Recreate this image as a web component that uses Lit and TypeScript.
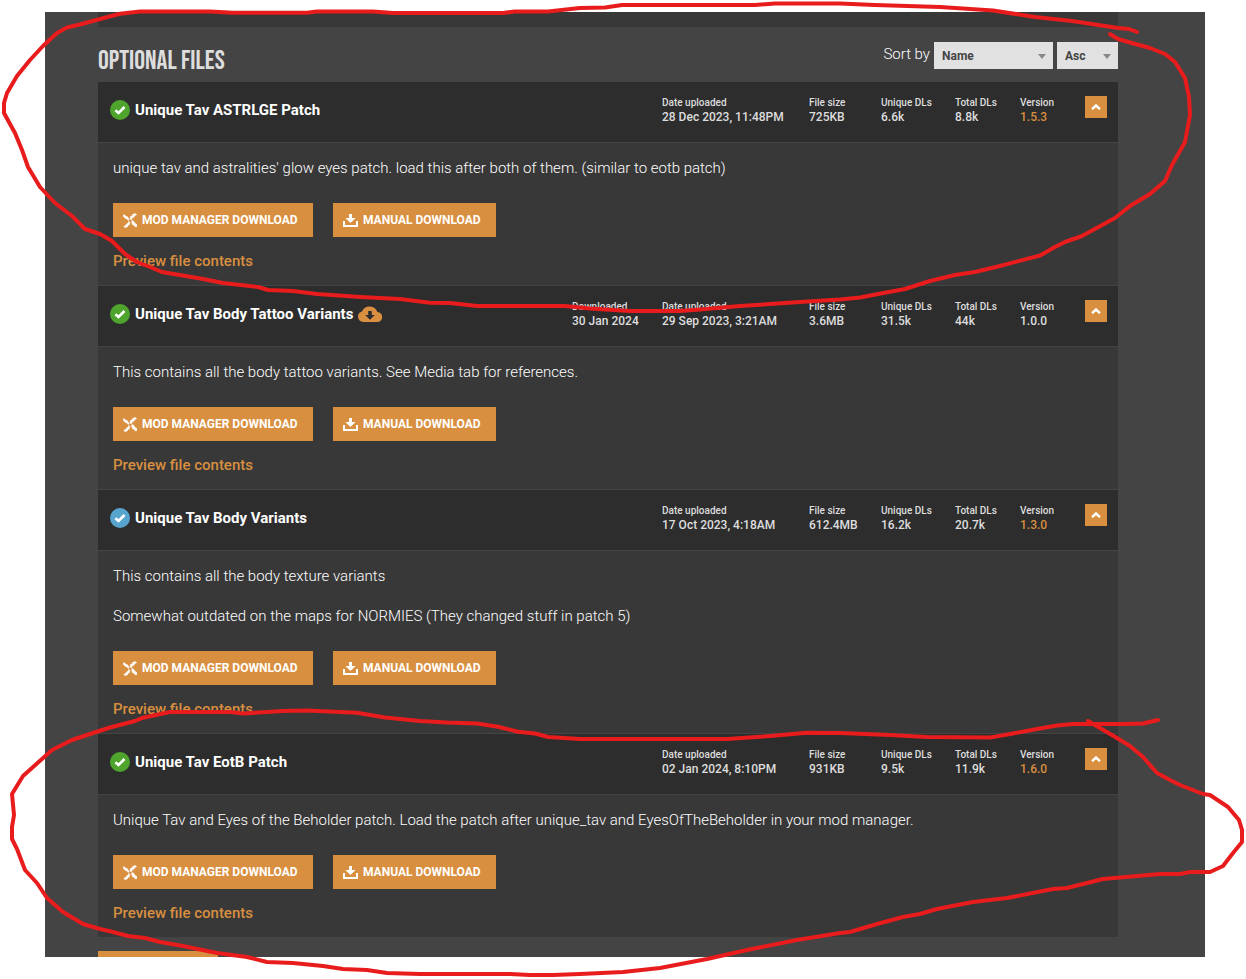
import { LitElement, html, css, svg, nothing } from "lit";
import { customElement, property, state } from "lit/decorators.js";

interface ModFile {
  name: string;
  status: "new" | "old";
  downloaded?: string;
  uploaded: string;
  size: string;
  unique: string;
  total: string;
  version: string;
  versionLink?: boolean;
  description: string[];
}

const FILES: ModFile[] = [
  {
    name: "Unique Tav ASTRLGE Patch",
    status: "new",
    uploaded: "28 Dec 2023, 11:48PM",
    size: "725KB",
    unique: "6.6k",
    total: "8.8k",
    version: "1.5.3",
    versionLink: true,
    description: [
      "unique tav and astralities' glow eyes patch. load this after both of them. (similar to eotb patch)",
    ],
  },
  {
    name: "Unique Tav Body Tattoo Variants",
    status: "new",
    downloaded: "30 Jan 2024",
    uploaded: "29 Sep 2023, 3:21AM",
    size: "3.6MB",
    unique: "31.5k",
    total: "44k",
    version: "1.0.0",
    description: ["This contains all the body tattoo variants. See Media tab for references."],
  },
  {
    name: "Unique Tav Body Variants",
    status: "old",
    uploaded: "17 Oct 2023, 4:18AM",
    size: "612.4MB",
    unique: "16.2k",
    total: "20.7k",
    version: "1.3.0",
    versionLink: true,
    description: [
      "This contains all the body texture variants",
      "Somewhat outdated on the maps for NORMIES (They changed stuff in patch 5)",
    ],
  },
  {
    name: "Unique Tav EotB Patch",
    status: "new",
    uploaded: "02 Jan 2024, 8:10PM",
    size: "931KB",
    unique: "9.5k",
    total: "11.9k",
    version: "1.6.0",
    versionLink: true,
    description: [
      "Unique Tav and Eyes of the Beholder patch. Load the patch after unique_tav and EyesOfTheBeholder in your mod manager.",
    ],
  },
];

const MARKS = [
  "1137,32 1129,29 1118,28 1105,26 1072,21 1035,17 993,10.5 940,7 875,5 840,3.5 775,3.5 755,5 622,5 605,7.5 580,8 548,11.5 515,11.5 503,13 393,13 373,11.5 317,11.5 307,12.8 233,12.8 210,11.5 140,11.5 120,13.7 100,19 80,24.5 67,27.5 57,33 43,46 30,60 17,76 7,93 4,103 4,113 10,124 15,133 22,150 28,167 40,187 55,203 72,216 85,229 100,234 112,241 125,254 137,262 150,267 162,272 203,279 223,283 258,287 268,290 293,291 317,294 360,297 400,299 430,302.7 450,303 477,306 565,306 590,308.5 630,311 680,311 700,309.5 740,306 800,302 840,299.5 860,297.5 878,294 905,289 930,281 955,275 975,272 1000,266 1040,255.5 1055,247 1065,242 1082,236 1115,218 1130,206 1150,194 1165,181 1172,165 1185,142 1190,115 1189,97 1185,78 1175,62 1165,54 1150,48 1130,42.5 1118,39 1110,34",
  "1158,720 1143,723.5 1123,724 1073,724 1057,725.5 1037,729 1013,733.5 990,737.5 927,737 890,735 840,733 807,732.7 770,736 727,739 580,739 548,737 535,733.5 518,731.7 498,726.7 477,723.5 447,722.5 420,721 385,717.5 357,712.7 307,710.5 283,711 243,713.5 230,712 170,712 143,717.7 135,721 110,727.5 93,733 72,740 52,750 23,776 12,794 14,815 12,827 12,839 17,849 25,870 37,883 47,898 63,912 83,924 100,929 113,932 128,936 145,938 160,942 183,946 217,953 247,957 267,962 293,963 323,966 343,969 367,970 387,973 420,974 510,974 530,975 553,975 580,974 623,972 660,968 707,959 747,950 797,940 840,933 850,932 877,924 903,917 920,914 937,909 973,902 1007,898 1053,889 1067,888 1103,879 1160,874 1180,874 1190,872 1210,872 1223,866 1233,853 1242,842 1242,830 1239,820 1228,807 1210,795 1203,794 1180,785 1170,780 1157,773 1143,757 1130,746 1117,738 1088,721",
];

@customElement("mod-file")
class ModFileRow extends LitElement {
  @property({ attribute: false }) file!: ModFile;
  @state() private open = true;

  static styles = css`
    :host {
      display: block;
    }
    .head {
      display: flex;
      align-items: flex-start;
      padding: 14px 11px 18px 12px;
      background: #2d2d2d;
      border-bottom: 1px solid #444;
    }
    .title {
      display: flex;
      align-items: center;
      flex: 1;
      gap: 5px;
      margin: 4px 0 0;
      font-size: 15px;
      line-height: 20px;
      font-weight: 700;
      color: #fff;
      white-space: nowrap;
    }
    .tick {
      width: 20px;
      height: 20px;
    }
    .tick-new {
      fill: #4ea42c;
    }
    .tick-old {
      fill: #57a5cf;
    }
    .cloud {
      width: 24px;
      height: 16px;
    }
    .stats {
      display: flex;
      margin: 0;
      height: 28px;
      color: #ddd;
      white-space: nowrap;
    }
    .stat-downloaded {
      width: 90px;
    }
    .stat-date {
      width: 147px;
    }
    .stat-size {
      width: 72px;
    }
    .stat-unique {
      width: 74px;
    }
    .stat-total,
    .stat-version {
      width: 65px;
    }
    dt {
      font-size: 10px;
      line-height: 14px;
      font-weight: 500;
    }
    dd {
      margin: 0;
      font-size: 12px;
      line-height: 14px;
      font-weight: 500;
    }
    a {
      color: #d98f40;
      text-decoration: none;
    }
    .toggle {
      display: grid;
      place-items: center;
      width: 22px;
      height: 22px;
      padding: 0;
      border: 0;
      background: #d98f40;
      cursor: pointer;
    }
    .toggle svg {
      width: 10px;
      height: 6px;
    }
    .body {
      padding: 15px 15px 14px;
      background: #383838;
    }
    .text {
      margin: 0 0 20px;
      font-size: 15px;
      line-height: 20px;
      font-weight: 300;
      color: #fff;
    }
    .text:last-of-type {
      margin-bottom: 0;
    }
    .actions {
      display: flex;
      gap: 20px;
      margin: 25px 0 14px;
    }
    .action {
      display: flex;
      align-items: center;
      gap: 5px;
      height: 34px;
      padding: 0 10px;
      border: 0;
      background: #d98f40;
      color: #fff;
      font-family: inherit;
      font-size: 12px;
      font-weight: 700;
      text-transform: uppercase;
      white-space: nowrap;
      cursor: pointer;
    }
    .manager {
      min-width: 200px;
    }
    .manual {
      min-width: 163px;
    }
    .icon {
      width: 14px;
      height: 15px;
    }
    .icon-wide {
      width: 15px;
      height: 15px;
    }
    .preview {
      display: block;
      width: max-content;
      font-size: 15px;
      line-height: 20px;
      font-weight: 500;
    }
  `;

  private stat(kind: string, label: string, value: unknown) {
    return html`<div class="stat-${kind}"><dt>${label}</dt><dd>${value}</dd></div>`;
  }

  render() {
    const f = this.file;
    return html`
      <div class="head">
        <h3 class="title">
          <svg class="tick tick-${f.status}" viewBox="0 0 20 20" aria-hidden="true">
            <circle cx="10" cy="10" r="10" />
            <path d="M5.4 10.2 8.5 13l6-6" fill="none" stroke="#fff" stroke-width="2.6" />
          </svg>
          <span>${f.name}</span>
          ${f.downloaded
            ? html`<svg class="cloud" viewBox="0 0 24 16" aria-hidden="true">
                <path fill="#d98f40" d="M5.5 16A5.4 5.4 0 0 1 4 5.4 8.3 8.3 0 0 1 19.4 6 5 5 0 0 1 19 16Z" />
                <path fill="#2d2d2d" d="M10.2 5h3.6v4h3L12 13.7 7.2 9h3z" />
              </svg>`
            : nothing}
        </h3>
        <dl class="stats">
          ${f.downloaded ? this.stat("downloaded", "Downloaded", f.downloaded) : nothing}
          ${this.stat("date", "Date uploaded", f.uploaded)}
          ${this.stat("size", "File size", f.size)}
          ${this.stat("unique", "Unique DLs", f.unique)}
          ${this.stat("total", "Total DLs", f.total)}
          ${this.stat("version", "Version", f.versionLink ? html`<a href="#changelog">${f.version}</a>` : f.version)}
        </dl>
        <button
          class="toggle"
          aria-label="Toggle details"
          aria-expanded=${this.open ? "true" : "false"}
          @click=${() => (this.open = !this.open)}
        >
          <svg viewBox="0 0 10 6" aria-hidden="true">
            <path d="M1 5.2 5 1.5 9 5.2" fill="none" stroke="#fff" stroke-width="2.4" />
          </svg>
        </button>
      </div>
      ${this.open
        ? html`<div class="body">
            ${f.description.map((line) => html`<p class="text">${line}</p>`)}
            <div class="actions">
              <button class="action manager">
                <svg class="icon" viewBox="0 0 14 15" aria-hidden="true">
                  <path
                    fill="#fff"
                    d="M.3 1.5 2 2.2 3 3.3 4.3 3.6 6.3 6.6 5.3 7.5 3.5 5.8 1.8 5.3 1.5 4.2 0 3.2z
                       M12.6.6 13.7 1.8 11.8 2.6 11.2 4 9.8 4.5 8.2 7 7 6 7.3 3.6 9 2.9 9.7 1.3z
                       M8.4 8 9.6 7.5 11.4 9 12 10.4 14 11.4V13.5L12.3 14 10.9 12.3 9.3 11.6z
                       M5.7 8.3 7 9.5 6.3 12 5 12.6 4.3 14 1.8 14.7.8 13.2 3 12.2 3.4 10.9 5 10.3z"
                    stroke="#fff"
                    stroke-width=".4"
                  />
                </svg>
                Mod manager download
              </button>
              <button class="action manual">
                <svg class="icon-wide" viewBox="0 0 15 15" aria-hidden="true">
                  <path fill="#fff" d="M6 1h3v4h3.6L7.5 10 2.4 5H6zM0 8h2v4h11V8h2v6H0z" />
                </svg>
                Manual download
              </button>
            </div>
            <a class="preview" href="#preview">Preview file contents</a>
          </div>`
        : nothing}
    `;
  }
}

@customElement("app-root")
class AppRoot extends LitElement {
  static styles = css`
    :host {
      display: block;
      position: relative;
      height: 100vh;
      box-sizing: border-box;
      padding: 12px 41px 22px 45px;
      background: #fff;
      overflow: hidden;
      font-family: Roboto, "Liberation Sans", sans-serif;
    }
    .frame {
      height: 100%;
      box-sizing: border-box;
      padding: 0 87px 0 53px;
      background: #444;
      overflow: hidden;
    }
    .previous {
      height: 15px;
      background: #383838;
    }
    .bar {
      display: flex;
      justify-content: space-between;
      align-items: flex-start;
      height: 40px;
      padding-top: 15px;
    }
    .heading {
      margin: 0;
      font-family: "Bebas Neue", "Roboto Condensed", "Liberation Sans Narrow", Roboto, sans-serif;
      font-size: 27px;
      line-height: 38px;
      font-weight: 300;
      color: #ddd;
      text-transform: uppercase;
      white-space: nowrap;
    }
    .sort {
      display: flex;
      gap: 4px;
      font-size: 15px;
      line-height: 24px;
      font-weight: 300;
      color: #fff;
    }
    .picker {
      position: relative;
    }
    .picker::after {
      content: "";
      position: absolute;
      right: 7px;
      top: 12px;
      border: 4px solid transparent;
      border-top: 5px solid #888;
      border-bottom: 0;
      pointer-events: none;
    }
    .select {
      display: block;
      appearance: none;
      height: 27px;
      padding: 0 8px;
      border: 0;
      border-radius: 0;
      background: #e1e1e1;
      color: #444;
      font-family: inherit;
      font-size: 12px;
      font-weight: 700;
    }
    .by {
      width: 119px;
    }
    .order {
      width: 61px;
    }
    .row + .row {
      border-top: 1px solid #444;
    }
    .next {
      width: 120px;
      height: 34px;
      margin-top: 14px;
      background: #d98f40;
    }
    .marks {
      position: absolute;
      inset: 0;
      width: 100%;
      height: 100%;
      pointer-events: none;
    }
  `;

  render() {
    return html`
      <main class="frame">
        <div class="previous"></div>
        <div class="bar">
          <h2 class="heading">Optional files</h2>
          <div class="sort">
            <label for="by">Sort by</label>
            <span class="picker">
              <select class="select by" id="by"><option>Name</option></select>
            </span>
            <span class="picker">
              <select class="select order" aria-label="Sort order"><option>Asc</option></select>
            </span>
          </div>
        </div>
        ${FILES.map((f) => html`<mod-file class="row" .file=${f}></mod-file>`)}
        <div class="next"></div>
      </main>
      <svg class="marks" viewBox="0 0 1246 979" preserveAspectRatio="none" aria-hidden="true">
        ${MARKS.map(
          (points) => svg`<polyline points=${points} fill="none" stroke="#e81c1c" stroke-width="4"
            stroke-linecap="round" stroke-linejoin="round" />`,
        )}
      </svg>
    `;
  }
}
